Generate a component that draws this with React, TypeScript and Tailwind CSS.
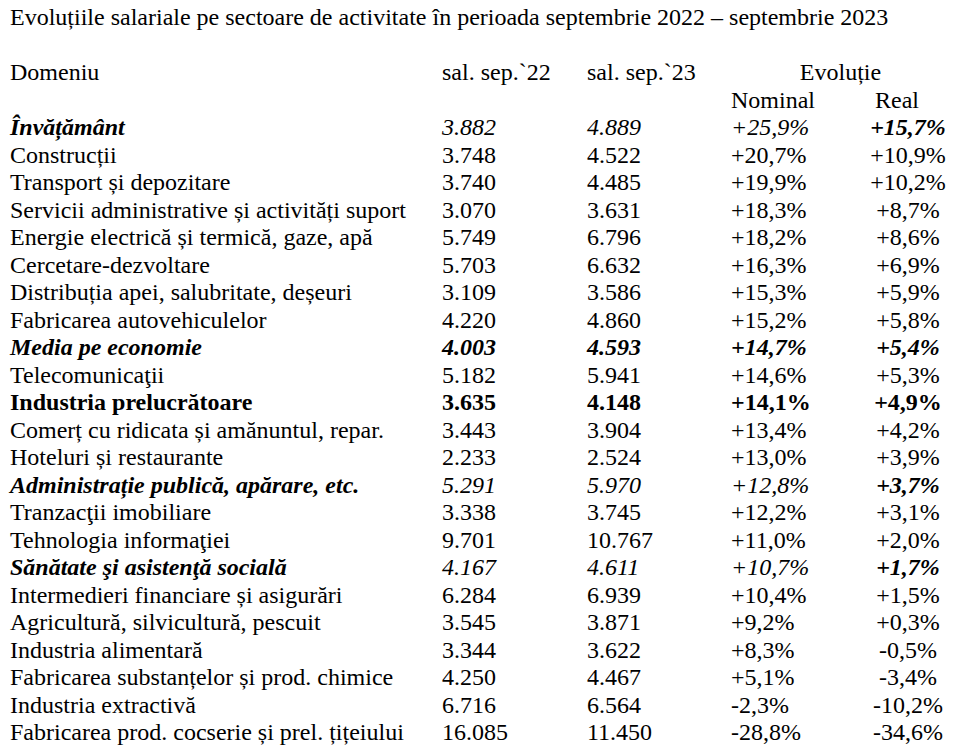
type Style = "normal" | "italicRow" | "mediaRow" | "bold";

type Row = {
  name: string;
  s22: string;
  s23: string;
  nominal: string;
  real: string;
  style?: Style;
};

const rows: Row[] = [
  { name: "Învățământ", s22: "3.882", s23: "4.889", nominal: "+25,9%", real: "+15,7%", style: "italicRow" },
  { name: "Construcții", s22: "3.748", s23: "4.522", nominal: "+20,7%", real: "+10,9%" },
  { name: "Transport și depozitare", s22: "3.740", s23: "4.485", nominal: "+19,9%", real: "+10,2%" },
  { name: "Servicii administrative și activități suport", s22: "3.070", s23: "3.631", nominal: "+18,3%", real: "+8,7%" },
  { name: "Energie electrică și termică, gaze, apă", s22: "5.749", s23: "6.796", nominal: "+18,2%", real: "+8,6%" },
  { name: "Cercetare-dezvoltare", s22: "5.703", s23: "6.632", nominal: "+16,3%", real: "+6,9%" },
  { name: "Distribuția apei, salubritate, deșeuri", s22: "3.109", s23: "3.586", nominal: "+15,3%", real: "+5,9%" },
  { name: "Fabricarea autovehiculelor", s22: "4.220", s23: "4.860", nominal: "+15,2%", real: "+5,8%" },
  { name: "Media pe economie", s22: "4.003", s23: "4.593", nominal: "+14,7%", real: "+5,4%", style: "mediaRow" },
  { name: "Telecomunicaţii", s22: "5.182", s23: "5.941", nominal: "+14,6%", real: "+5,3%" },
  { name: "Industria prelucrătoare", s22: "3.635", s23: "4.148", nominal: "+14,1%", real: "+4,9%", style: "bold" },
  { name: "Comerț cu ridicata și amănuntul, repar.", s22: "3.443", s23: "3.904", nominal: "+13,4%", real: "+4,2%" },
  { name: "Hoteluri și restaurante", s22: "2.233", s23: "2.524", nominal: "+13,0%", real: "+3,9%" },
  { name: "Administrație publică, apărare, etc.", s22: "5.291", s23: "5.970", nominal: "+12,8%", real: "+3,7%", style: "italicRow" },
  { name: "Tranzacţii imobiliare", s22: "3.338", s23: "3.745", nominal: "+12,2%", real: "+3,1%" },
  { name: "Tehnologia informaţiei", s22: "9.701", s23: "10.767", nominal: "+11,0%", real: "+2,0%" },
  { name: "Sănătate şi asistenţă socială", s22: "4.167", s23: "4.611", nominal: "+10,7%", real: "+1,7%", style: "italicRow" },
  { name: "Intermedieri financiare și asigurări", s22: "6.284", s23: "6.939", nominal: "+10,4%", real: "+1,5%" },
  { name: "Agricultură, silvicultură, pescuit", s22: "3.545", s23: "3.871", nominal: "+9,2%", real: "+0,3%" },
  { name: "Industria alimentară", s22: "3.344", s23: "3.622", nominal: "+8,3%", real: "-0,5%" },
  { name: "Fabricarea substanțelor și prod. chimice", s22: "4.250", s23: "4.467", nominal: "+5,1%", real: "-3,4%" },
  { name: "Industria extractivă", s22: "6.716", s23: "6.564", nominal: "-2,3%", real: "-10,2%" },
  { name: "Fabricarea prod. cocserie și prel. țițeiului", s22: "16.085", s23: "11.450", nominal: "-28,8%", real: "-34,6%" },
];

// label, values, real column classes per row style
function styleFor(style: Style = "normal") {
  switch (style) {
    case "italicRow":
      return { label: "font-bold italic", values: "italic", real: "font-bold italic" };
    case "mediaRow":
      return { label: "font-bold italic", values: "font-bold italic", real: "font-bold italic" };
    case "bold":
      return { label: "font-bold", values: "font-bold", real: "font-bold" };
    default:
      return { label: "", values: "", real: "" };
  }
}

const grid = "grid grid-cols-[432px_145px_144px_135px_84px]";

export default function App() {
  return (
    <div className="w-[964px] h-[755px] bg-white text-black overflow-hidden pl-[10px] pt-[4px] font-['Liberation_Serif',_'Times_New_Roman',_serif] text-[24px] leading-[27.5px]">
      <div className="whitespace-nowrap">
        Evoluțiile salariale pe sectoare de activitate în perioada septembrie 2022 – septembrie 2023
      </div>
      <div className="h-[27.5px]" />
      <div className={`${grid} whitespace-nowrap`}>
        <div>Domeniu</div>
        <div>sal. sep.`22</div>
        <div>sal. sep.`23</div>
        <div className="col-span-2 text-center">Evoluție</div>
      </div>
      <div className={`${grid} whitespace-nowrap`}>
        <div />
        <div />
        <div />
        <div>Nominal</div>
        <div className="pl-[9px]">Real</div>
      </div>
      {rows.map((r) => {
        const s = styleFor(r.style);
        return (
          <div key={r.name} className={`${grid} whitespace-nowrap`}>
            <div className={s.label}>{r.name}</div>
            <div className={s.values}>{r.s22}</div>
            <div className={s.values}>{r.s23}</div>
            <div className={s.values}>{r.nominal}</div>
            <div className={`text-center ${s.real}`}>{r.real}</div>
          </div>
        );
      })}
    </div>
  );
}
